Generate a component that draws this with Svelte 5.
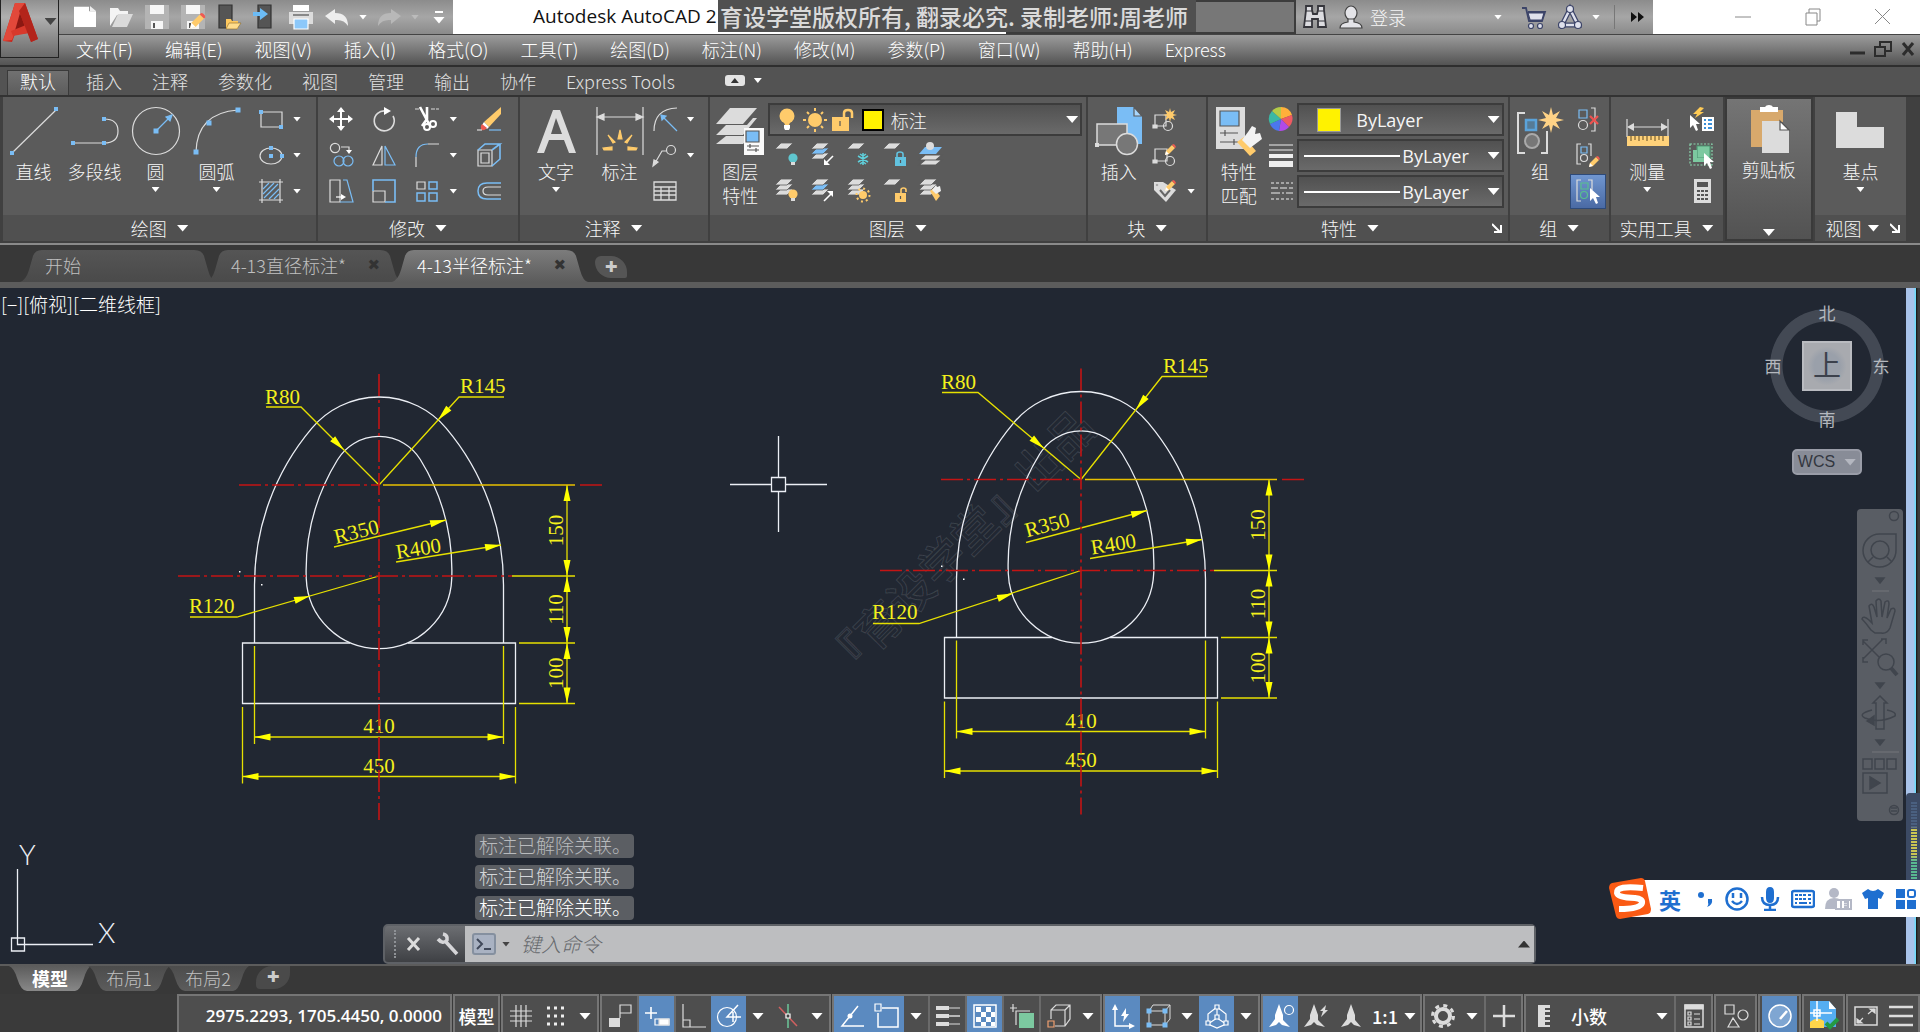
<script>
    let command = "";
    let layer = "标注";

    const W = "#dcdcdc";
    const B = "#7abdf5";
    const O = "#ffcb6b";

    // Small square grip used by many of the drawing icons
    const dot = (x, y, s = 4) =>
        `<rect x="${x - s / 2}" y="${y - s / 2}" width="${s}" height="${s}" fill="${B}" stroke="none"/>`;

    const sheets = (n, mid = W) =>
        [14, 9, 4]
            .slice(3 - n)
            .map(
                (y, i) =>
                    `<path d="M7 ${y - 3}h12l-6 6H1z" fill="${n === 3 && i === 1 ? mid : W}" stroke="#5a5a5a" stroke-width=".8"/>`,
            )
            .join("");

    const bulb = (c) =>
        `<circle cx="19" cy="16" r="4.6" fill="${c}" stroke="none"/><path d="M17 20h4v3h-4z" fill="${W}" stroke="none"/>`;
    const lock = (c) =>
        `<path d="M13 15h11v9H13z" fill="${c}" stroke="none"/><path d="M18.500 18v3" stroke="#555"/>`;
    const brush = `<path d="M12 13l4-3 6 8-4 5z" fill="${O}" stroke="none"/><path d="M14 12l4 4 5-3-1-5-3 1-1-2z" fill="#eee" stroke="none"/>`;
    const pencil = (x, y) =>
        `<g transform="translate(${x} ${y})" stroke="none"><path d="M0 11l1-4 6-6 3 3-6 6z" fill="${O}"/><path d="M7 1l1-1q2 0 3 3l-1 1z" fill="#f05a50"/><path d="M0 11l1-4 3 3z" fill="#fff"/></g>`;
    const pointer = (x, y, s = 1) =>
        `<path transform="translate(${x} ${y}) scale(${s})" d="M0 0v13l3-3 3 6 2-1-2-6h4z" fill="#fff" stroke="none"/>`;

    const icons = {
        // Quick access
        new: `<path d="M1 2h15v5h7v18H1z" transform="scale(1 .88)" fill="#fff" stroke="none"/><path d="M17 1v5h6z" fill="#eee" stroke="none"/>`,
        open: `<path d="M1 21V3h8l2 3h8v4H8z" fill="#f4f4f4" stroke="none"/><path d="M3 22L9 9h15l-6 13z" fill="#dadada" stroke="none"/>`,
        save: `<path d="M0 0h24v24H0z" fill="#b4b4b4" stroke="none"/><path d="M5 0h14v9H5zM6 16h12v8H6z" fill="#f6f6f6" stroke="none"/><path d="M8 18h2v5H8z" fill="#555" stroke="none"/>`,
        phoneOpen: `<path d="M2 0h13v23H2z" fill="#555" stroke="#333"/><path d="M9 14h5l1 2h6v8H9z" fill="#ffc95e" stroke="none"/><path d="M12 18h12l-4 6H9z" fill="#ffdc8c" stroke="#8a6a2a" stroke-width=".6"/>`,
        phoneSave: `<path d="M5 0h13v23H5z" fill="#555" stroke="#333"/><path d="M0 7h7V3l8 6-8 6v-4H0z" fill="#6cbcf6" stroke="none"/>`,
        print: `<path d="M4 0h16v6H4z" fill="#fff" stroke="none"/><path d="M0 7h24v12H0z" fill="#dcdcdc" stroke="none"/><path d="M4 9h16v2H4z" fill="#888" stroke="none"/><path d="M5 14h14v10H5z" fill="#8cc8fa" stroke="#fff"/>`,
        undo: `<path d="M0 11l10-7v4q13 0 13 13-4-7-13-6v4z" fill="#eee" stroke="none"/>`,
        redo: `<path d="M24 11l-10-7v4Q1 8 1 21q4-7 13-6v4z" fill="#b8b8b8" stroke="none"/>`,
        // Info center
        binoculars: `<path d="M3 1h6v4l1 4h4l1-4V1h6v4l2 17h-8v-8h-6v8H1L3 5z" fill="#dcdce0" stroke="#35353b" stroke-width="1.800"/><path d="M2 16h7M15 16h7M3 6h6M15 6h6" stroke="#35353b"/>`,
        user: `<ellipse cx="12" cy="8" rx="6" ry="7" fill="#e4e4e8" stroke="#444"/><path d="M1 23q0-5 8-6v-3h6v3q8 1 8 6z" fill="#e4e4e8" stroke="#444"/>`,
        cart: `<path d="M0 3h4l3 13h13l3-9H6M9 11h13M12 7l1 9M17 7l-1 9" stroke="#3c4468" stroke-width="1.800"/><path d="M6 8h16l-2 7H8z" fill="#dfe1ec" stroke="#3c4468"/><circle cx="9" cy="21" r="2.500" fill="#dfe1ec" stroke="#3c4468"/><circle cx="18" cy="21" r="2.500" fill="#dfe1ec" stroke="#3c4468"/>`,
        share: `<path d="M12 4L4 20h16z" stroke="#3c4468" stroke-width="5"/><path d="M12 4L4 20h16z" stroke="#dfe1ec" stroke-width="2.500"/><circle cx="12" cy="4" r="3.500" fill="#dfe1ec" stroke="#3c4468"/><circle cx="4" cy="20" r="3.500" fill="#dfe1ec" stroke="#3c4468"/><circle cx="20" cy="20" r="3.500" fill="#dfe1ec" stroke="#3c4468"/>`,
        // Draw, large
        line: `<path d="M3 45L46 3"/>${dot(2, 46)}${dot(46, 2)}`,
        pline: `<path d="M2 36h31q14 0 14-12T33 12"/>${dot(2, 36)}${dot(33, 36)}${dot(33, 12)}`,
        circle: `<circle cx="24" cy="24" r="23.500"/><path d="M24 24L38 10" stroke="${B}"/><path d="M40 8l-2 6-4-4z" fill="${B}" stroke="${B}"/>${dot(24, 24, 5)}`,
        arc: `<path d="M3 45Q4 6 45 3"/>${dot(3, 45, 5)}${dot(16, 16, 5)}${dot(45, 3, 5)}`,
        // Draw, small
        rect: `<path d="M2 5h21v15H2z"/>${dot(2, 5)}${dot(22, 20)}`,
        ellipse: `<ellipse cx="12" cy="13" rx="11" ry="8"/>${dot(12, 5)}${dot(12, 13)}${dot(23, 13)}`,
        hatch: `<path d="M3 0v24M21 0v24M0 3h24M0 21h24"/><path d="M4 10l6-6M4 15L15 4M5 19L19 5M10 20l10-10M15 20l5-5" stroke="${B}"/>`,
        // Modify
        move: `<path d="M12 2v20M2 12h20" stroke-width="2" stroke="#fff"/><path d="M12 0l4 5H8zM12 24l4-5H8zM0 12l5-4v8zM24 12l-5-4v8z" fill="#fff" stroke="none"/>`,
        rotate: `<path d="M14 4a10 10 0 1 0 7 5" stroke-width="1.600"/><path d="M12 0l7 4-7 4z" fill="#fff" stroke="none"/>`,
        trim: `<path d="M0 2h6M16 2h8" stroke-dasharray="4 1"/><path d="M5 0l9 17M12 0l0 12-5 7" stroke="#fff" stroke-width="2.600"/><circle cx="12" cy="20" r="3" stroke="#fff" stroke-width="2"/><circle cx="18" cy="17" r="3" stroke="#fff" stroke-width="2"/>`,
        erase: `<path d="M24 0v7L12 20l-5-5z" fill="${O}" stroke="none"/><path d="M7 15l5 5-2 2-5-4z" fill="#fff" stroke="none"/><path d="M5 17l5 4q-4 4-6 1-1-3 1-5z" fill="#ee5a50" stroke="none"/><path d="M0 23h5"/><path d="M12 23h12" stroke="${B}"/>`,
        copy: `<circle cx="6" cy="5" r="4.600"/><circle cx="10" cy="18" r="5" stroke="${B}"/><circle cx="19" cy="18" r="5" stroke="${B}"/><path d="M12 4h8v4"/><path d="M17 7h6l-3 4z" fill="#fff" stroke="none"/>`,
        mirror: `<path d="M10 3v19H1z"/><path d="M13 3v19h10z" stroke="${B}"/>`,
        fillet: `<path d="M1 24v-10M13 1h11"/><path d="M1 14Q1 1 13 1" stroke="${B}"/>`,
        explode: `<path d="M1 7h14v16H1zM4 10h8v10H4z" stroke="${W}"/><path d="M1 7l7-6h15l-8 6M23 1v15l-8 7" stroke="${B}" stroke-width="1.600"/>`,
        stretch: `<path d="M1 1h10v22H1z"/><path d="M11 23h13L18 1h-4" stroke="${B}"/><path d="M7 18h7" stroke="#fff"/><path d="M12 15l5 3-5 3z" fill="#fff" stroke="none"/>`,
        scale: `<path d="M1 12h12v11H1z"/><path d="M1 12V1h22v22H13" stroke="${B}" stroke-width="1.600"/>`,
        array: `<path d="M2 3h8v7H2z"/><path d="M14 3h8v7h-8zM2 14h8v8H2zM14 14h8v8h-8z" stroke="${B}" stroke-width="1.500"/>`,
        offset: `<path d="M24 8H11q-5 0-5 4t5 4h13"/><path d="M24 4H10Q1 4 1 12t9 8h14" stroke="${B}" stroke-width="1.500"/>`,
        // Annotation
        text: `<path d="M5 46L21 3h7l16 43h-7l-5-13H17l-5 13zM19 27h11L24 11z" fill="${W}" stroke="none"/>`,
        dim: `<path d="M1 0v48M47 0v48M3 10h42"/><path d="M1 10l7-3v6zM47 10l-7-3v6z" fill="${W}"/><path d="M22 32l2-9 2 9zM7 41l9-1v3H8zM41 41l-9-1v3h8zM12 28l7 7-2 1zM36 28l-7 7 2 1z" fill="${O}" stroke="${O}"/>`,
        radius: `<path d="M1 24Q1 2 24 1"/><path d="M10 10l14 14" stroke="${B}"/><path d="M8 8l5 1-4 4z" fill="${B}" stroke="${B}"/>`,
        leader: `<circle cx="18" cy="7" r="4.500"/><path d="M13 8H9L2 20"/><path d="M0 23l1-6 4 2z" fill="${W}"/>`,
        table: `<path d="M1 3h22v18H1zM1 8h22M1 12h22M1 16h22M8 8v13M16 8v13" stroke-width="1.300"/>`,
        // Layers
        layerProps: `<path d="M14 1h27L27 17H0zM10 18h4l17 0 6-7h4L27 28H0zM10 29h18l6-6h6L27 37H0z" fill="${W}" stroke="none"/><path d="M28 21h20v27H28z" fill="#fafafa" stroke="none"/><path d="M30 24h13v11H30z" fill="${B}" stroke="#555"/><path d="M31 39h12M31 43h12M34 37v4M40 41v4" stroke="#555"/>`,
        bulb: `<circle cx="12" cy="8" r="7.500" fill="${O}" stroke="none"/><path d="M8 12h8l-2 5h-4z" fill="${O}" stroke="none"/><path d="M9 17h6v3l-1 2h-4l-1-2z" fill="#fff" stroke="none"/>`,
        sun: `<circle cx="12" cy="12" r="7" fill="${O}" stroke="none"/><path d="M12 0v3M12 21v3M0 12h3M21 12h3M4 4l2 2M18 18l2 2M4 20l2-2M18 6l2-2" stroke="${O}" stroke-width="2"/>`,
        unlock: `<path d="M1 9h17v14H1z" fill="${O}" stroke="none"/><path d="M13 9V5q0-3 4-3t4 3v5" stroke="${O}" stroke-width="2.500"/><path d="M9 13v5" stroke="#555"/>`,
        layerOff: sheets(1) + bulb("#5fc6cf"),
        layerIso: sheets(3, B) + `<path d="M23 14l-7 7" stroke="#fff" stroke-width="1.600"/><path d="M14 23v-6l6 6z" fill="#fff" stroke="none"/>`,
        layerFreeze: sheets(1) + `<path d="M17 11v12M12 14l10 6M22 14l-10 6M14 12l3 2 3-2M14 22l3-2 3 2" stroke="#5fd0dc" stroke-width="1.500"/>`,
        layerLock: sheets(1) + lock("#62c3e0") + `<path d="M15 15v-3q0-2 3-2t3 2v3" stroke="#62c3e0" stroke-width="1.600"/>`,
        layerCurrent: `<path d="M7 13h17l-6 5H1zM7 18h17l-6 5H1z" fill="${W}" stroke="#5a5a5a"/><path d="M7 5h17l-6 7H1z" fill="${B}" stroke="none"/><circle cx="12" cy="4" r="4" fill="${W}" stroke="none"/>`,
        layerOn: sheets(3) + bulb(O),
        layerUniso: sheets(3, B) + `<path d="M14 23l7-7" stroke="#fff" stroke-width="1.600"/><path d="M23 13v6l-6-6z" fill="#fff" stroke="none"/>`,
        layerThaw: sheets(3) + `<circle cx="17" cy="17" r="4" fill="${O}" stroke="none"/><circle cx="17" cy="17" r="6.500" stroke="${O}" stroke-width="2" stroke-dasharray="2 3"/>`,
        layerUnlock: sheets(1) + lock(O) + `<path d="M19 15v-3q0-2 2.500-2t2.500 2v2" stroke="${O}" stroke-width="1.600"/>`,
        layerMatch: sheets(3) + brush,
        // Block
        insert: `<path d="M22 0h17l8 9v28H22z" fill="${B}" stroke="none"/><path d="M39 0l8 9h-8z" fill="#a8d6fc" stroke="#5a5a5a"/><path d="M2 17h30v21H2z" fill="#777" stroke="${W}" stroke-width="1.500"/><circle cx="32" cy="37" r="10.500" fill="#777" stroke="${W}" stroke-width="1.500"/><path d="M0 36h4v4H0z" fill="${W}" stroke="none"/>`,
        blockNew: `<path d="M2 8h11v11H2z"/><circle cx="15" cy="19" r="4.500"/><path d="M0 18h4v3H0z" fill="${W}"/><path d="M17 1l1 4 4-2-2 4 4 1-4 1 2 4-4-2-1 4-1-4-4 2 2-4-4-1 4-1-2-4 4 2z" fill="${O}" stroke="none"/>`,
        blockEdit: `<path d="M2 6h12v12H2z"/><circle cx="17" cy="18" r="4.500"/><path d="M0 17h4v3H0z" fill="${W}"/>${pencil(12, 1)}`,
        attribute: `<path d="M1 3h9l13 8-10 12L1 11z" fill="${W}" stroke="none"/><path d="M7 11l5 6 5-6" stroke="#666" stroke-width="2"/><circle cx="4" cy="6" r="1.300" fill="#555"/>${pencil(12, 1)}`,
        // Properties
        match: `<path d="M1 0h29v42H1z" fill="${W}" stroke="none"/><path d="M5 4h19v15H5z" fill="${B}" stroke="#555"/><path d="M5 26h18M5 35h18M10 23v6M19 32v6" stroke="#555"/><path d="M22 35l7-5 12 14-6 5z" fill="${O}" stroke="none"/><path d="M27 33l8 8 12-9-2-6-5 1 1-6-4-2-4 6z" fill="#f2f2f2" stroke="none"/>`,
        lineweights: `<path d="M0 2h24M0 7h24" stroke="#eee"/><path d="M0 13h24" stroke="#eee" stroke-width="4"/><path d="M0 21h24" stroke="#eee" stroke-width="6"/>`,
        linetypes: `<path d="M2 4h22M2 20h22" stroke="#eee" stroke-dasharray="3 2"/><path d="M2 9h22" stroke="#eee" stroke-dasharray="7 2"/><path d="M2 14h22" stroke="#eee" stroke-dasharray="9 2 2 2"/>`,
        wheel: `<g stroke="none"><path d="M12 12V0a12 12 0 0 1 11 8z" fill="#ffb03a"/><path d="M12 12l11-4a12 12 0 0 1-3 12z" fill="#ef5a62"/><path d="M12 12l8 8a12 12 0 0 1-10 4z" fill="#b04ae8"/><path d="M12 12l-2 12A12 12 0 0 1 1 17z" fill="#4b77ee"/><path d="M12 12L1 17A12 12 0 0 1 3 4z" fill="#3ab8a4"/><path d="M12 12L3 4a12 12 0 0 1 9-4z" fill="#b3ca48"/></g>`,
        // Groups
        group: `<path d="M9 6H2v40h7M25 46h6V24" stroke-width="2"/><path d="M10 13h10v10H10z" fill="#567b96" stroke="#5ba3da" stroke-width="2.500"/><circle cx="16" cy="34" r="7" fill="#777" stroke="#aaa" stroke-width="2"/><path d="M35 0l2 8 7-4-4 7 8 2-8 2 4 7-7-4-2 8-2-8-7 4 4-7-8-2 8-2-4-7 7 4z" fill="#ffd386" stroke="none"/>`,
        ungroup: `<path d="M3 3h8v8H3z" stroke="${B}"/><circle cx="7" cy="18" r="4.500"/><path d="M15 1h4v23h-4"/><path d="M14 9l8 8M22 9l-8 8" stroke="#ef5350" stroke-width="2.200"/>`,
        groupEdit: `<path d="M5 1H1v20h4M12 1h3v12" /><path d="M5 4h6v6H5z" stroke="${B}"/><circle cx="8" cy="15" r="3.500"/>${pencil(13, 13)}`,
        groupSelect: `<path d="M5 1H1v21h4M12 1h4v10"/><path d="M5 4h7v6H5z" stroke="#58c08e"/><circle cx="8" cy="16" r="3.500" stroke="#58c08e"/>${pointer(14, 9)}`,
        // Utilities
        measure: `<path d="M4 12v18M45 12v18M6 20h38"/><path d="M4 20l7-4v8zM45 20l-7-4v8z" fill="${W}" stroke="none"/><path d="M4 29h42v10H4z" fill="#ffd27a" stroke="none"/><path d="M8 29v5M12 29v4M16 29v5M20 29v4M24 29v5M28 29v4M32 29v5M36 29v4M40 29v5" stroke="#7a6030"/>`,
        quickSelect: `<path d="M12 10h12v14H12z" fill="#fff" stroke="none"/><path d="M14 13h2M14 17h2M14 21h2M18 13h4M18 17h4M18 21h4" stroke="#3a8fd8" stroke-width="2"/>${pointer(0, 8)}<path d="M10 0L3 7h4l-2 4 9-6h-4l4-4z" fill="#ffcb55" stroke="none"/>`,
        selectAll: `<path d="M0 1h22v21H0z" stroke="#8ad9b0" stroke-dasharray="2 1.500"/><path d="M7 3h13v12H7z" fill="#7cc9a0" stroke="#4e9a74"/><path d="M3 7v12h12v-4H7V7z" fill="#7cc9a0" stroke="none"/>${pointer(14, 10)}`,
        calc: `<path d="M4 0h17v24H4z" fill="${W}" stroke="none"/><path d="M7 3h11v5H7zM7 11h3v2H7zM11 11h3v2h-3zM15 11h3v2h-3zM7 15h3v2H7zM11 15h3v2h-3zM15 15h3v2h-3zM7 19h3v2H7zM11 19h3v2h-3zM15 19h3v2h-3z" fill="#555" stroke="none"/>`,
        paste: `<path d="M6 5h32v12H17v25H6z" fill="#d8a96c" stroke="none"/><path d="M15 2h5q1-2 4-2t4 2h5v5H15z" fill="#fff" stroke="none"/><path d="M17 16h18l9 9v23H17z" fill="${W}" stroke="none"/><path d="M35 16v9h9z" fill="#fff" stroke="#555"/>`,
        base: `<path d="M0 5h21v15h27v21H0z" fill="${W}" stroke="none"/>`,
        // Status bar
        grid: `<path d="M7 1v22M12 1v22M17 1v22M1 7h22M1 12h22M1 17h22"/>`,
        snap: `<path d="M3 4h3M10 4h3M17 4h3M3 12h3M10 12h3M17 12h3M3 20h3M10 20h3M17 20h3" stroke="#eee" stroke-width="3"/>`,
        infer: `<path d="M1 14h11v9H1z" fill="${W}" stroke="none"/><path d="M12 14V1h11v8H12"/>`,
        dynamic: `<path d="M6 3v12M0 9h12" stroke="#fff" stroke-width="1.600"/><path d="M10 15h14v6H10z" stroke="#fff"/><path d="M14 15h10v6H14z" fill="#fff"/>`,
        ortho: `<path d="M1 0v23h23M1 16h7v7"/>`,
        polar: `<circle cx="10" cy="13" r="9.500" stroke="#fff"/><path d="M24 13H10L21 1M16 8v10" stroke="#fff" stroke-width="1.500"/>`,
        iso: `<path d="M12 0v24" stroke="#6cc79a" stroke-width="1.500"/><path d="M3 3l18 19" stroke="#d06060" stroke-width="1.500"/><path d="M10 10h4v4h-4z" fill="#444" stroke="#fff"/>`,
        otrack: `<path d="M18 2L2 22h22" stroke="#fff" stroke-width="1.500"/><circle cx="10" cy="12" r="2.500" fill="#fff" stroke="none"/>`,
        osnap: `<path d="M7 4h16v19H3V9" stroke="#fff" stroke-width="1.500"/><path d="M0 0h6v7H0z" stroke="#fff"/>`,
        lwt: `<path d="M0 4h24M0 20h24"/><path d="M0 4h13M0 20h13" stroke-width="4"/><path d="M0 12h24" stroke-width="1.500"/><path d="M0 12h13" stroke-width="4"/>`,
        transparency: `<path d="M1 1h22v22H1z" stroke="#fff" stroke-width="1.500"/><path d="M3 3h5v5H3zM13 3h5v5h-5zM8 8h5v5H8zM18 8h4v5h-4zM3 13h5v5H3zM13 13h5v5h-5zM8 18h5v4H8zM18 18h4v4h-4z" fill="#fff" stroke="none"/>`,
        cycling: `<path d="M3 0v8M0 4h7M6 21V7h14"/><path d="M9 9h15v15H9z" fill="#7cc9a0" stroke="none"/>`,
        osnap3d: `<path d="M4 15V6l5-5h14v14l-5 7H8M4 6h14v16M18 6l5-5"/><path d="M1 17h6v6H1z" stroke="#f0a070"/>`,
        ducs: `<path d="M4 4v18h18" stroke="#fff" stroke-width="1.500"/><path d="M4 0l3 6H1zM24 22l-6-3v6z" fill="#fff" stroke="none"/><path d="M15 4l-5 8h3l-1 6 6-8h-3z" fill="#fff" stroke="none"/>`,
        filter: `<path d="M3 7v14h16V7zM3 7l4-6h17v14l-5 6M19 7l5-6" stroke-width="1"/>${dot(3, 7, 5)}${dot(19, 7, 5)}${dot(3, 21, 5)}${dot(19, 21, 5)}`,
        gizmo: `<path d="M12 3L3 10v10l9 4 9-4V10zM12 14V4M12 14l-9 6M12 14l9 6" stroke="#fff"/><path d="M10 1h4v4h-4zM10 11h4v4h-4zM1 17h4v4H1zM19 17h4v4h-4z" fill="#5b8ac0" stroke="#fff"/>`,
        annoOn: `<path d="M10 0l4 11v5l7 7-8-2-3-3-3 3-7 2 6-8V11z" fill="#fff" stroke="none"/><circle cx="20" cy="6" r="4.500" stroke="#fff"/>`,
        annoAuto: `<path d="M10 0l4 11v5l7 7-8-2-3-3-3 3-7 2 6-8V11z" fill="${W}" stroke="none"/><path d="M22 1l-6 6h3l-2 6 7-7h-3z" fill="${W}" stroke="none"/>`,
        anno: `<path d="M12 0l4 11v5l6 7-7-2-3-3-3 3-7 2 6-8V11z" fill="${W}" stroke="none"/>`,
        gear: `<circle cx="12" cy="12" r="7" stroke-width="4"/><circle cx="12" cy="12" r="10.500" stroke-width="3" stroke-dasharray="4 4.240"/>`,
        plus: `<path d="M12 1v22M1 12h22" stroke-width="2.500"/>`,
        ruler: `<path d="M6 1h12v3h-5v2h5v2h-5v3h5v2h-5v3h5v2h-5v3h5v2H6z" fill="${W}" stroke="none"/>`,
        quickProps: `<path d="M3 1h18v22H3z" stroke-width="1.500"/><path d="M3 1h18v4H3z" fill="${W}"/><path d="M6 8h3v3H6zM6 13h3v3H6zM6 18h3v3H6zM12 10h6M12 15h6M12 20h6"/>`,
        isolate: `<path d="M1 1h9v9H1zM4 23l5-9 6 9z"/><circle cx="19" cy="11" r="5"/>`,
        perf: `<circle cx="12" cy="12" r="11" fill="#7fa6d2" stroke="#fff" stroke-width="1.500"/><path d="M12 15L19 7" stroke="#fff" stroke-width="2.500"/>`,
        trusted: `<path d="M-2 -3h19l7 8v18H-2z" fill="#55aef2" stroke="none"/><path d="M17 -3v8h7z" fill="#fff" stroke="none"/><path d="M-2 18q7-6 14-1v7H-2z" fill="#ffd54a" stroke="none"/><path d="M-2 9h22M5 -3v20M2 6h6v6H2z" stroke="#fff" stroke-width="1.500"/><path d="M14 19l4 4 8-8" stroke="#249a44" stroke-width="4"/>`,
        clean: `<path d="M1 3h22v18H1z" stroke-width="1.500"/><path d="M14 10l6-5M9 14l-5 5"/><path d="M16 5h5v4zM3 15v4h5z" fill="${W}"/>`,
        menu: `<path d="M0 3h24M0 12h24M0 21h24" stroke-width="2.500"/>`,
        wrench: `<path d="M7 2q5 1 4 6-4 5-9-1M10 10l11 12" stroke="#d5d5d8" stroke-width="3.600"/>`,
    };
    icons.saveAs = icons.save + `<g transform="translate(9 8) scale(1.400)">${pencil(0, 0)}</g>`;

    const quick = ["new", "open", "save", "saveAs", "phoneOpen", "phoneSave", "print"];
    const menus = [
        "文件(F)", "编辑(E)", "视图(V)", "插入(I)", "格式(O)", "工具(T)", "绘图(D)",
        "标注(N)", "修改(M)", "参数(P)", "窗口(W)", "帮助(H)", "Express",
    ];
    const tabs = ["默认", "插入", "注释", "参数化", "视图", "管理", "输出", "协作", "Express Tools"];
    const drawBig = [
        ["line", "直线"],
        ["pline", "多段线"],
        ["circle", "圆", true],
        ["arc", "圆弧", true],
    ];
    const modify = [
        ["move"], ["rotate"], ["trim", true], ["erase"],
        ["copy"], ["mirror"], ["fillet", true], ["explode"],
        ["stretch"], ["scale"], ["array", true], ["offset"],
    ];
    const layerRows = [
        ["layerOff", "layerIso", "layerFreeze", "layerLock", "layerCurrent"],
        ["layerOn", "layerUniso", "layerThaw", "layerUnlock", "layerMatch"],
    ];

    // Status bar: groups of toggles, "v" stands for a drop-down arrow, "|" for a divider
    const statusGroups = [
        ["grid", "snap", "v"],
        ["infer", "|", "dynamic*", "|", "ortho", "polar*", "v", "iso", "v"],
        ["otrack*", "osnap*", "v", "|", "lwt", "|", "transparency*", "|", "cycling", "|", "osnap3d", "v"],
        ["ducs*", "filter", "v", "gizmo*", "v"],
    ];

    // Leaders are relative to the centre of the upper arcs of each figure
    const figures = [
        {
            x: 379,
            y: 485,
            leaders: [
                { text: "R80", at: [-114, -81], rot: 0, line: [[-113, -78], [-78, -78], [0, 0]], from: [-78, -78], tip: [-35, -35] },
                { text: "R145", at: [81, -92], rot: 0, line: [[125, -88], [80, -88], [0, 0]], from: [80, -88], tip: [59, -65] },
                { text: "R350", at: [-43, 59], rot: -14, line: [[-45, 62], [67, 35]], from: [-45, 62], tip: [67, 35] },
                { text: "R400", at: [18, 74], rot: -9, line: [[17, 77], [122, 60]], from: [17, 77], tip: [122, 60] },
                { text: "R120", at: [-190, 128], rot: 0, line: [[-189, 132], [-142, 132], [0, 91]], from: [-142, 132], tip: [-69, 111] },
            ],
        },
        {
            x: 1081,
            y: 479.5,
            leaders: [
                { text: "R80", at: [-140, -91], rot: 0, line: [[-139, -87], [-103, -87], [0, 0]], from: [-103, -87], tip: [-37, -31] },
                { text: "R145", at: [82, -107], rot: 0, line: [[126, -103], [81, -103], [0, 0]], from: [81, -103], tip: [55, -70] },
                { text: "R350", at: [-54, 58], rot: -15, line: [[-55, 63], [66, 31]], from: [-55, 63], tip: [66, 31] },
                { text: "R400", at: [11, 75], rot: -9, line: [[9, 79], [121, 60]], from: [9, 79], tip: [121, 60] },
                { text: "R120", at: [-209, 139], rot: 0, line: [[-208, 144], [-162, 144], [0, 91]], from: [-162, 144], tip: [-68, 114] },
            ],
        },
    ];
    const vertical = [
        { text: "150", a: 0, b: 91 },
        { text: "110", a: 91, b: 158 },
        { text: "100", a: 158, b: 218.5 },
    ];
    const horizontal = [
        { text: "410", half: 124.5, y: 252, top: 161 },
        { text: "450", half: 136.5, y: 291.5, top: 222 },
    ];
    const angle = (from, tip) =>
        (Math.atan2(tip[1] - from[1], tip[0] - from[0]) * 180) / Math.PI;
</script>

<svelte:head>
    <title>Autodesk AutoCAD</title>
</svelte:head>

{#snippet icon(name, size = 24)}
    <svg class="ic" width={size} height={size} viewBox="0 0 {size} {size}" aria-hidden="true">
        {@html icons[name]}
    </svg>
{/snippet}

{#snippet small(name, arrow)}
    <span class="small">
        <button aria-label={name}>{@render icon(name)}</button>
        {#if arrow}<button class="drop" aria-label="更多"><i class="tri"></i></button>{/if}
    </span>
{/snippet}

{#snippet big(name, label, arrow)}
    <button class="big">
        {@render icon(name, 48)}
        <span>{label}</span>
        {#if arrow}<i class="tri"></i>{/if}
    </button>
{/snippet}

{#snippet launcher()}
    <button class="launcher" aria-label="设置">
        <svg width="10" height="10" viewBox="0 0 10 10"><path d="M0 1l8 8M9 2v7H2" /></svg>
    </button>
{/snippet}

{#snippet head(tip, deg)}
    <path class="head" d="M0 0L-16 -3.500V3.500Z" transform="translate({tip[0]} {tip[1]}) rotate({deg})" />
{/snippet}

{#snippet cell(item)}
    {#if item === "v"}
        <button class="st-arrow" aria-label="更多"><i class="tri lg"></i></button>
    {:else if item === "|"}
        <i class="bar"></i>
    {:else}
        <button class="st" class:on={item.endsWith("*")} aria-label={item.replace("*", "")}>
            {@render icon(item.replace("*", ""))}
        </button>
    {/if}
{/snippet}

<main>
    <header>
        <button class="app" aria-label="应用程序菜单">
            <svg width="38" height="42" viewBox="0 0 38 42" aria-hidden="true">
                <path d="M0 40L12 2h10l13 36-7 3-3-9-13 1-3 8z" fill="#c8281e" />
                <path d="M12 2h10L15 24l-6 15-9 1z" fill="#e2483a" />
                <path d="M17 12l7 20-13 1z" fill="#8c1812" />
                <path d="M8 30l15-6 3 8-16 3z" fill="#d8392c" />
                <path d="M22 2l13 36-7 3L16 10z" fill="#b3241b" />
            </svg>
            <i class="tri lg dark"></i>
        </button>
        <div class="titlebar">
            <div class="quick">
                {#each quick as name}
                    <button aria-label={name}>{@render icon(name)}</button>
                {/each}
                <button aria-label="放弃">{@render icon("undo")}</button>
                <i class="tri"></i>
                <button aria-label="重做">{@render icon("redo")}</button>
                <i class="tri dim"></i>
                <button class="more" aria-label="自定义"><i class="tri lg"></i></button>
            </div>
            <div class="title">Autodesk AutoCAD 2</div>
            <input class="search" aria-label="搜索" />
            <div class="info">
                <button aria-label="搜索">{@render icon("binoculars")}</button>
                <button aria-label="用户">{@render icon("user")}</button>
                <button class="login">登录 <i class="tri"></i></button>
                <button aria-label="应用商店">{@render icon("cart")}</button>
                <button aria-label="连接">{@render icon("share")}</button>
                <i class="tri"></i>
                <button class="ff" aria-label="展开">
                    <svg width="14" height="10" viewBox="0 0 14 10"><path d="M0 0l6 5-6 5zM7 0l6 5-6 5z" fill="#111" /></svg>
                </button>
            </div>
            <div class="window">
                <button aria-label="最小化"><svg width="16" height="18"><path d="M0 9h16" /></svg></button>
                <button aria-label="还原"><svg width="16" height="18"><path d="M1 5h11v12H1zM4 5V1h11v12h-3" /></svg></button>
                <button aria-label="关闭"><svg width="16" height="18"><path d="M0 1l15 15M15 1L0 16" /></svg></button>
            </div>
            <div class="banner">育设学堂版权所有, 翻录必究. 录制老师:周老师</div>
        </div>
        <nav class="menubar">
            {#each menus as item}
                <button>{item}</button>
            {/each}
            <div class="mdi">
                <button aria-label="最小化窗口"><svg width="18" height="18"><path d="M1 13h15" stroke-width="3" /></svg></button>
                <button aria-label="还原窗口"><svg width="18" height="18"><path d="M1 7h10v9H1zM6 6V2h11v9h-5" stroke-width="2" /></svg></button>
                <button aria-label="关闭窗口"><svg width="18" height="18"><path d="M4 3l10 12M14 3L4 15" stroke-width="3" /></svg></button>
            </div>
        </nav>
    </header>

    <nav class="tabs">
        {#each tabs as tab, i}
            <button class:active={i === 0}>{tab}</button>
        {/each}
        <button class="fold" aria-label="最小化功能区"><span><i class="tri up"></i></span><i class="tri"></i></button>
    </nav>

    <section class="ribbon">
        <div class="panel">
            <div class="body">
                {#each drawBig as [name, label, arrow]}
                    {@render big(name, label, arrow)}
                {/each}
                <div class="stack pad">
                    {@render small("rect", true)}
                    {@render small("ellipse", true)}
                    {@render small("hatch", true)}
                </div>
            </div>
            <h2>绘图 <i class="tri lg"></i></h2>
        </div>
        <div class="panel">
            <div class="body modify">
                {#each modify as [name, arrow]}
                    {@render small(name, arrow)}
                {/each}
            </div>
            <h2>修改 <i class="tri lg"></i></h2>
        </div>
        <div class="panel wide">
            <div class="body">
                {@render big("text", "文字", true)}
                {@render big("dim", "标注")}
                <div class="stack">
                    {@render small("radius", true)}
                    {@render small("leader", true)}
                    {@render small("table")}
                </div>
            </div>
            <h2>注释 <i class="tri lg"></i></h2>
        </div>
        <div class="panel">
            <div class="body">
                {@render big("layerProps", "图层\n特性")}
                <div class="layers">
                    <div class="combo">
                        {@render icon("bulb")}
                        {@render icon("sun")}
                        {@render icon("unlock")}
                        <b class="swatch"></b>
                        <select bind:value={layer} aria-label="图层"><option>标注</option></select>
                        <i class="tri lg"></i>
                    </div>
                    {#each layerRows as row}
                        <div class="row">
                            {#each row as name}
                                <button aria-label={name}>{@render icon(name)}</button>
                            {/each}
                        </div>
                    {/each}
                </div>
            </div>
            <h2>图层 <i class="tri lg"></i></h2>
        </div>
        <div class="panel">
            <div class="body">
                {@render big("insert", "插入")}
                <div class="stack near">
                    {@render small("blockNew")}
                    {@render small("blockEdit")}
                    {@render small("attribute", true)}
                </div>
            </div>
            <h2>块 <i class="tri lg"></i></h2>
        </div>
        <div class="panel">
            <div class="body">
                {@render big("match", "特性\n匹配")}
                <div class="stack">
                    {@render small("wheel")}
                    {@render small("lineweights")}
                    {@render small("linetypes")}
                </div>
                <div class="props">
                    <div class="combo">
                        <b class="swatch tall"></b>
                        <select aria-label="对象颜色"><option>ByLayer</option></select>
                        <i class="tri lg"></i>
                    </div>
                    <div class="combo">
                        <b class="rule"></b>
                        <select aria-label="线宽"><option>ByLayer</option></select>
                        <i class="tri lg"></i>
                    </div>
                    <div class="combo">
                        <b class="rule"></b>
                        <select aria-label="线型"><option>ByLayer</option></select>
                        <i class="tri lg"></i>
                    </div>
                </div>
            </div>
            <h2 class="launch">特性 <i class="tri lg"></i>{@render launcher()}</h2>
        </div>
        <div class="panel">
            <div class="body">
                {@render big("group", "组")}
                <div class="stack groups">
                    {@render small("ungroup")}
                    {@render small("groupEdit")}
                    {@render small("groupSelect")}
                </div>
            </div>
            <h2>组 <i class="tri lg"></i></h2>
        </div>
        <div class="panel wide">
            <div class="body">
                {@render big("measure", "测量", true)}
                <div class="stack">
                    {@render small("quickSelect")}
                    {@render small("selectAll")}
                    {@render small("calc")}
                </div>
            </div>
            <h2>实用工具 <i class="tri lg"></i></h2>
        </div>
        <div class="panel clip">
            <div class="body">{@render big("paste", "剪贴板")}</div>
            <i class="tri lg"></i>
        </div>
        <div class="panel view">
            <div class="body">{@render big("base", "基点", true)}</div>
            <h2 class="launch">视图 <i class="tri lg"></i>{@render launcher()}</h2>
        </div>
    </section>

    <nav class="files">
        <button>开始</button>
        <button>4-13直径标注* <b>✖</b></button>
        <button class="active">4-13半径标注* <b>✖</b></button>
        <button class="add" aria-label="新图形">✚</button>
    </nav>

    <section class="canvas">
        <svg class="drawing" viewBox="0 288 1920 676" preserveAspectRatio="xMinYMin meet">
            <text class="mark" transform="translate(848 657) rotate(-45)" x="-23" y="16">『育设学堂』出品</text>
            {#each figures as fig}
                <g transform="translate({fig.x} {fig.y})">
                    <path class="solid" d="M-124.500 158V99.700A242.800 242.800 0 0 1 -67.300 -56.700A88 88 0 0 1 67.300 -56.700A242.800 242.800 0 0 1 124.500 99.700V158" />
                    <path class="solid" d="M-41.300 -25.500A48.500 48.500 0 0 1 41.300 -25.500A212.400 212.400 0 0 1 72.750 93.600A72.800 72.800 0 0 1 -72.750 93.600A212.400 212.400 0 0 1 -41.300 -25.500" />
                    <path class="solid" d="M-29 158H-136.500V218.500H136.500V158H29" />
                    {#each vertical as d}
                        <path class="dimline" d="M188 {d.a}V{d.b}" />
                        {@render head([188, d.a], -90)}
                        {@render head([188, d.b], 90)}
                        <text class="label mid" transform="translate(184 {(d.a + d.b) / 2}) rotate(-90)">{d.text}</text>
                    {/each}
                    <path class="dimline" d="M133 91H196M140 158H196M140 218.500H196" />
                    {#each horizontal as d}
                        <path class="dimline" d="M{-d.half} {d.y}H{d.half}M{-d.half} {d.top}V{d.y + 7}M{d.half} {d.top}V{d.y + 7}" />
                        {@render head([-d.half, d.y], 180)}
                        {@render head([d.half, d.y], 0)}
                        <text class="label mid" x="0" y={d.y - 4}>{d.text}</text>
                    {/each}
                    {#each fig.leaders as l}
                        <polyline class="dimline" points={l.line.join(" ")} />
                        {@render head(l.tip, angle(l.from, l.tip))}
                        <text class="label" transform="translate({l.at.join(' ')}) rotate({l.rot})">{l.text}</text>
                    {/each}
                    <path class="axis" d="M0 -111V335M-140 0H0M201 0H223M-201 91H133" />
                    <path class="dimline gold" d="M4 0H196" />
                    <path d="M-140 86h1.500v1.500h-1.500zM-118 99h1.500v1.500h-1.500z" fill="#fff" />
                </g>
            {/each}
            <path class="solid" d="M730 484.500H771M785 484.500H827M778.500 436V478M778.500 491V532M771.500 477.500h14v14h-14z" />
            <g class="ucs">
                <path class="solid" d="M17.500 869V944.500H93M11.500 938h13v13h-13z" />
                <text x="19" y="865">Y</text>
                <text x="98" y="943">X</text>
            </g>
        </svg>

        <div class="cube">
            <span>北</span>
            <span>西</span><b>上</b><span>东</span>
            <span>南</span>
        </div>
        <button class="wcs">WCS <i class="tri lg"></i></button>

        <div class="navbar">
            <svg width="46" height="312" viewBox="0 0 46 312" aria-hidden="true">
                <circle cx="37" cy="7" r="4.500" />
                <path d="M23 25h16v16a16.500 16.500 0 1 1-16-16z" />
                <circle cx="23" cy="41" r="9" />
                <path d="M16 48l-5 5M30 48l5 5" />
                <path class="f" d="M19 69h8l-4 5zM19 174h8l-4 5zM19 231h8l-4 5z" />
                <path class="sep" d="M15 82h17M15 243h27" />
                <path d="M14 121q-5-7-9-11 1-4 7 1l3 3-3-17q3-4 5 1l3 10-1-16q3-4 5 0l1 16 3-15q4-3 4 2l-2 14 4-9q4-2 4 2l-5 17q-3 6-9 5h-6z" />
                <path d="M6 132l17 17M6 150l20-20M6 136v-5h5M24 130h5v5M6 148v5h5" />
                <circle cx="29" cy="153" r="8" />
                <path class="thick" d="M34 159l6 7" />
                <path d="M19 220v-26h-3l7-7 7 7h-3v26z" />
                <path d="M15 201q-15 4-7 8 14 6 30-2 2-4-8-6" />
                <path class="f" d="M10 212l7-5v9z" />
                <path d="M6 250h9v10H6zM18 250h9v10h-9zM30 250h9v10h-9zM6 264h24v20H6z" />
                <path class="f" d="M13 268l10 6-10 6z" />
                <circle cx="37" cy="301" r="4.500" />
                <path d="M34 299h6M34 302h6" />
            </svg>
        </div>

        <div class="edge"><i></i></div>

        <div class="ime">
            <svg class="logo" width="46" height="44" viewBox="0 0 46 44" aria-hidden="true">
                <path d="M5 6L34 1q3 0 4 3l6 28q0 4-3 5L13 42q-3 0-4-3L2 11q0-4 3-5z" fill="#fa5a14" />
                <path d="M36 11Q9 8 10 16q1 5 18 5 8 1 7 5-2 6-23 6" fill="none" stroke="#fff" stroke-width="6" />
            </svg>
            <b>英</b>
            <svg width="24" height="24" viewBox="0 0 24 24"><circle cx="9" cy="8" r="3" fill="#1f6fd0" /><path d="M16 12h4q1 6-5 8 2-3 1-4z" fill="#1f6fd0" /></svg>
            <svg width="24" height="24" viewBox="0 0 24 24"><circle cx="12" cy="12" r="10.500" fill="none" stroke="#1f6fd0" stroke-width="2.500" /><path d="M8 6v5M16 6v5M7 14q5 6 10 0" fill="none" stroke="#1f6fd0" stroke-width="2.500" /></svg>
            <svg width="24" height="24" viewBox="0 0 24 24"><path d="M8 5q0-5 4-5t4 5v6q0 5-4 5t-4-5z" fill="#1f6fd0" /><path d="M4 10q0 8 8 8t8-8M12 18v5M6 23h12" fill="none" stroke="#1f6fd0" stroke-width="2.500" /></svg>
            <svg width="24" height="24" viewBox="0 0 24 24"><rect x="1" y="4" width="22" height="16" rx="2" fill="none" stroke="#1f6fd0" stroke-width="2.500" /><path d="M4 8h3M8 8h3M12 8h3M17 8h3M4 12h3M8 12h3M12 12h3M17 12h3M4 16h2M8 16h8M18 16h2" stroke="#1f6fd0" stroke-width="2" /></svg>
            <svg width="28" height="24" viewBox="0 0 28 24"><circle cx="10" cy="6" r="5" fill="#b4b8c6" /><path d="M1 22q0-11 9-11t9 7v4z" fill="#b4b8c6" /><path d="M12 13h15v9H12z" fill="#fff" stroke="#b4b8c6" stroke-width="2" /><path d="M17 14v7M20 15h4v5h-4M20 17.500h4" stroke="#b4b8c6" stroke-width="2" fill="none" /></svg>
            <svg width="24" height="24" viewBox="0 0 24 24"><path d="M7 2q5 4 10 0l6 4-3 6-3-1v11H7V11l-3 1-3-6z" fill="#1f6fd0" /></svg>
            <svg width="24" height="24" viewBox="0 0 24 24"><path d="M2 2h9v9H2zM2 13h9v9H2zM13 13h9v9h-9z" fill="#1f6fd0" /><rect x="14" y="3" width="7" height="7" rx="2" fill="none" stroke="#1f6fd0" stroke-width="2" /></svg>
        </div>

        <div class="console">
            <p>标注已解除关联。</p>
            <p>标注已解除关联。</p>
            <p>标注已解除关联。</p>
            <div class="command">
                <i class="grip"></i>
                <button aria-label="关闭"><svg width="16" height="16"><path d="M2 2l11 12M13 2L2 14" stroke="#dcdcdc" stroke-width="3" /></svg></button>
                <button aria-label="自定义">{@render icon("wrench")}</button>
                <label>
                    <svg width="24" height="24" viewBox="0 0 24 24"><rect x="1" y="2" width="22" height="20" rx="2" fill="#a9b2c2" stroke="#85909f" stroke-width="2" /><path d="M5 7l5 5-5 5M12 17h7" fill="none" stroke="#40495a" stroke-width="2" /></svg>
                    <i class="tri dark"></i>
                    <input bind:value={command} placeholder="键入命令" aria-label="键入命令" />
                    <i class="tri up lg"></i>
                </label>
            </div>
        </div>
    </section>

    <nav class="layouts">
        <button class="active">模型</button>
        <button>布局1</button>
        <button>布局2</button>
        <button class="add" aria-label="新建布局">✚</button>
    </nav>

    <footer>
        <div class="grp"><button class="coords">2975.2293, 1705.4450, 0.0000</button></div>
        <div class="grp"><button class="model">模型</button></div>
        {#each statusGroups as group}
            <div class="grp">
                {#each group as item}
                    {@render cell(item)}
                {/each}
            </div>
        {/each}
        <div class="grp">
            {#each ["annoOn*", "annoAuto", "anno"] as item}
                {@render cell(item)}
            {/each}
            <button class="scale">1:1 <i class="tri lg"></i></button>
        </div>
        <div class="grp">
            {#each ["gear", "v", "|", "plus"] as item}
                {@render cell(item)}
            {/each}
        </div>
        <div class="grp grow">
            {@render cell("ruler")}
            <select class="units" aria-label="单位"><option>小数</option></select>
            <i class="tri lg"></i>
            {@render cell("|")}
            {@render cell("quickProps")}
        </div>
        <div class="grp roomy">{@render cell("isolate")}</div>
        <div class="grp roomy">{@render cell("perf*")}</div>
        <div class="grp roomy">{@render cell("trusted")}</div>
        <div class="grp">
            {@render cell("clean")}
            {@render cell("menu")}
        </div>
    </footer>
</main>

<style>
    :global(body) {
        background: #383838;
    }

    main {
        display: flex;
        flex-direction: column;
        min-height: 100vh;
        overflow: hidden;
        font-family: "Noto Sans CJK SC", "Open Sans", sans-serif;
        font-size: 18px;
        font-weight: 300;
        line-height: 24px;
        color: #f6f6f6;
    }

    button,
    input,
    select {
        margin: 0;
        padding: 0;
        border: none;
        background: none;
        color: inherit;
        font: inherit;
        appearance: none;
        outline: none;
    }

    button {
        display: flex;
        align-items: center;
        justify-content: center;
        white-space: nowrap;
    }

    .ic {
        display: block;
        flex: none;
        overflow: visible;
        fill: none;
        stroke: #dcdcdc;
        stroke-width: 1.2;
    }

    /* Triangles */
    .tri {
        flex: none;
        width: 8px;
        height: 5px;
        background: #fff;
        clip-path: polygon(0 0, 100% 0, 50% 100%);
    }

    .tri.lg {
        width: 12px;
        height: 7px;
    }

    .tri.up {
        clip-path: polygon(50% 0, 100% 100%, 0 100%);
        background: #333;
    }

    .tri.dim {
        background: #bbb;
    }

    .tri.dark {
        background: #444;
    }

    /* Header */
    header {
        display: grid;
        grid-template-columns: 59px 1fr;
        grid-template-rows: 35px 32px;
    }

    .app {
        z-index: 1;
        grid-area: 1 / 1 / 3 / 2;
        height: 58px;
        padding-bottom: 14px;
        gap: 4px;
        background: linear-gradient(#909090, #b0b0b0 30%, #6a6a6a);
        border: 1px solid #222;
        border-top: none;
    }

    .titlebar {
        position: relative;
        display: flex;
        height: 34px;
        border-bottom: 1px solid #444;
        background: #fff;
    }

    .quick,
    .info {
        display: flex;
        align-items: center;
        background: linear-gradient(#8c8c8c, #a6a6a6 50%, #8a8a8a);
    }

    .quick {
        gap: 12px;
        width: 380px;
        padding-left: 14px;
    }

    .quick .tri {
        margin: 0 -2px;
    }

    .more {
        border-top: 2px solid #fff;
        padding-top: 4px;
        margin-left: 6px;
    }

    .title {
        flex: 1;
        padding-left: 80px;
        font-family: "Open Sans", sans-serif;
        font-size: 19px;
        font-weight: 400;
        line-height: 33px;
        color: #111;
        white-space: nowrap;
    }

    .search {
        width: 290px;
        box-sizing: border-box;
        background: #777;
        border: 2px solid #3c3c3c;
    }

    .info {
        gap: 12px;
        width: 350px;
        padding-left: 7px;
    }

    .info .tri {
        margin-left: -2px;
    }

    .login {
        flex: 1;
        justify-content: space-between;
        padding-right: 8px;
        margin-left: -5px;
    }

    .ff {
        height: 24px;
        margin-left: 2px;
        padding: 0 8px 0 16px;
        border-left: 1px solid #777;
    }

    .window {
        display: flex;
        align-items: center;
        justify-content: flex-end;
        gap: 54px;
        width: 267px;
        padding-right: 29px;
        box-sizing: border-box;
    }

    .window path {
        fill: none;
        stroke: #888;
    }

    .banner {
        position: absolute;
        top: 0;
        left: 659px;
        padding: 0 8px 0 2px;
        background: #505050;
        color: #dadada;
        font-size: 23px;
        font-weight: 500;
        line-height: 32px;
        white-space: pre;
    }

    .menubar {
        grid-area: 2 / 1 / 3 / 3;
        display: flex;
        align-items: center;
        gap: 32px;
        padding: 0 0 3px 76px;
        background: linear-gradient(#9c9c9c, #535353);
        border-bottom: 2px solid #2e2e2e;
        color: #fff;
    }

    .mdi {
        display: flex;
        gap: 7px;
        margin-left: auto;
        padding-right: 3px;
    }

    .mdi path {
        fill: none;
        stroke: #2c2c2c;
    }

    /* Ribbon tabs */
    .tabs {
        display: flex;
        align-items: flex-end;
        gap: 4px;
        height: 28px;
        padding-left: 7px;
        background: #535353;
        border-bottom: 2px solid #333;
        color: #e2e2e2;
    }

    .tabs button {
        height: 25px;
        padding: 0 13px 4px;
        box-sizing: border-box;
    }

    .tabs .active {
        padding: 0 12px 4px;
        background: linear-gradient(#717171, #5c5c5c);
        border: 1px solid #3a3a3a;
        border-bottom: none;
        color: #fff;
    }

    .tabs .fold {
        gap: 9px;
        margin-left: 20px;
    }

    .fold span {
        display: flex;
        align-items: center;
        justify-content: center;
        width: 20px;
        height: 11px;
        background: #e4e4e4;
        border-radius: 3px;
    }

    /* Ribbon */
    .ribbon {
        display: grid;
        grid-template-columns: 313fr 199fr 188fr 376fr 118fr 299fr 99fr 112fr 88fr 91fr;
        gap: 2px;
        padding: 0 14px 0 3px;
        background: #404040;
        border-bottom: 2px solid #8a8a8a;
    }

    .panel {
        display: flex;
        flex-direction: column;
        min-width: 0;
        height: 144px;
        margin-bottom: 2px;
        background: #5b5b5b;
    }

    .body {
        display: flex;
        height: 118px;
        box-sizing: border-box;
        padding-top: 4px;
    }

    h2 {
        display: flex;
        align-items: center;
        justify-content: center;
        gap: 10px;
        height: 26px;
        margin: 0;
        background: #505050;
        font-size: 18px;
        font-weight: 300;
        white-space: nowrap;
    }

    .launcher {
        margin-left: auto;
        padding-right: 6px;
    }

    .launcher path {
        fill: none;
        stroke: #fff;
        stroke-width: 2;
    }

    .launch::before {
        content: "";
        margin-right: auto;
    }

    .view .launch {
        gap: 6px;
    }

    .big {
        flex: none;
        flex-direction: column;
        justify-content: flex-start;
        width: 61px;
        padding-top: 6px;
    }

    .wide .big {
        width: 54px;
    }

    .wide .big:first-child {
        width: 73px;
    }

    .big span {
        padding-top: 4px;
        white-space: pre;
    }

    .big .tri {
        margin-top: 4px;
    }

    .stack {
        display: flex;
        flex-direction: column;
    }

    .wide .stack {
        padding-left: 6px;
    }

    .pad {
        padding-left: 12px;
    }

    .near {
        padding-left: 4px;
    }

    .small {
        display: flex;
        align-items: center;
        height: 36px;
    }

    .drop {
        width: 28px;
        height: 24px;
    }

    .modify {
        display: grid;
        grid-template-columns: 43px 43px 62px 24px;
        grid-auto-rows: 36px;
        padding-left: 11px;
    }

    .layers,
    .props {
        flex: 1;
        min-width: 0;
        padding: 2px 4px 0 0;
    }

    .layers {
        margin-left: -3px;
    }

    .combo {
        display: flex;
        align-items: center;
        gap: 4px;
        height: 33px;
        padding: 0 2px 0 5px;
        box-sizing: border-box;
        border: 2px solid #3c3c3c;
        background: linear-gradient(#515151, #6a6a6a);
    }

    .combo select {
        flex: 1;
        min-width: 0;
    }

    .swatch {
        width: 18px;
        height: 18px;
        margin: 0 3px;
        background: #fff200;
        border: 2px solid #000;
    }

    .swatch.tall {
        width: 22px;
        height: 22px;
        margin: 0 11px 0 13px;
        border: 1px solid #999;
    }

    .rule {
        width: 96px;
        height: 2px;
        margin-right: -2px;
        background: #fff;
    }

    .layers .row {
        display: flex;
        gap: 12px;
        height: 36px;
        align-items: center;
        padding-left: 6px;
    }

    .props {
        display: flex;
        flex-direction: column;
        gap: 3px;
        padding-left: 4px;
    }

    .props .combo {
        font-family: "Open Sans", sans-serif;
        font-weight: 400;
    }

    .groups button {
        width: 34px;
        height: 33px;
    }

    .groups .small:last-child button {
        background: linear-gradient(#7096d0, #4a6aa4);
        outline: 1px solid #2e4a78;
    }

    .clip {
        align-items: center;
        background: linear-gradient(#757575, #525252);
        outline: 2px solid #3a3a3a;
        outline-offset: -2px;
    }

    .clip .big {
        padding-top: 4px;
    }

    .clip > .tri {
        margin-top: 14px;
    }

    .view .body {
        justify-content: center;
    }

    /* File tabs */
    .files {
        display: flex;
        align-items: flex-end;
        height: 37px;
        padding-left: 20px;
        border-bottom: 6px solid #5c5c5c;
        background: #383838;
        color: #c0c0c0;
    }

    .files button {
        justify-content: space-between;
        width: 196px;
        height: 32px;
        padding: 0 22px 2px 25px;
        margin-right: -10px;
        box-sizing: border-box;
        background: linear-gradient(#555, #4a4a4a);
        clip-path: path("M0 32Q6 30 9 20L13 6Q15 0 22 0H174Q182 0 184 6L188 20Q191 31 196 32Z");
    }

    .files b {
        font-family: "DejaVu Sans", sans-serif;
        font-size: 15px;
        color: #333;
    }

    .files .active {
        z-index: 1;
        background: linear-gradient(#7c7c7c, #5c5c5c);
        color: #fff;
    }

    .files .add {
        width: 32px;
        height: 22px;
        margin: 0 0 4px 17px;
        padding: 0;
        justify-content: center;
        background: #555;
        border-radius: 6px 16px 2px 16px;
        clip-path: none;
        color: #ccc;
        font-family: "DejaVu Sans", sans-serif;
        font-size: 15px;
    }

    /* Canvas */
    .canvas {
        position: relative;
        flex: 1;
        min-height: 676px;
        background: #212732;
    }

    .canvas::before {
        content: "[−][俯视][二维线框]";
        position: absolute;
        top: 4px;
        left: 1px;
        font-size: 19px;
        color: #fff;
    }

    .drawing {
        position: absolute;
        inset: 0;
        width: 100%;
        height: 100%;
    }

    .solid {
        fill: none;
        stroke: #eceff5;
        stroke-width: 1.3;
    }

    .dimline {
        fill: none;
        stroke: #e6e000;
        stroke-width: 1.3;
    }

    .gold {
        stroke: #e8c000;
    }

    .head {
        fill: #ffff00;
    }

    .axis {
        fill: none;
        stroke: #c41414;
        stroke-width: 1.6;
        stroke-dasharray: 22 4 3 4;
    }

    .label {
        fill: #f4f01c;
        font-family: "Liberation Serif", serif;
        font-size: 21px;
        font-weight: 400;
    }

    .mid {
        text-anchor: middle;
    }

    .mark {
        fill: none;
        stroke: #ffffff;
        stroke-opacity: 0.12;
        font-size: 45px;
        font-weight: 500;
    }

    .ucs text {
        fill: #eceff5;
        font-family: Lato, sans-serif;
        font-size: 28px;
        font-weight: 300;
    }

    .cube {
        position: absolute;
        top: 21px;
        right: 36px;
        display: grid;
        grid-template-columns: 28px 1fr 28px;
        grid-template-rows: 24px 1fr 24px;
        place-items: center;
        width: 114px;
        height: 114px;
        border-radius: 50%;
        color: #b4b8be;
        font-size: 17px;
        font-weight: 400;
        background: radial-gradient(circle, transparent 44px, #434954 45px, #434954 57px, transparent 58px);
    }

    .cube span:first-child {
        grid-column: 1 / 4;
        margin-top: -16px;
    }

    .cube span:last-child {
        grid-column: 1 / 4;
        margin-bottom: -16px;
    }

    .cube span:nth-child(2) {
        margin-left: -22px;
    }

    .cube span:nth-child(4) {
        margin-right: -22px;
    }

    .cube b {
        width: 50px;
        height: 50px;
        box-sizing: border-box;
        border: 2px solid #b9bbc0;
        background: radial-gradient(#9aa0aa 40%, #a8aaaf 60%);
        color: #3c414c;
        font-size: 28px;
        font-weight: 400;
        line-height: 42px;
        text-align: center;
    }

    .wcs {
        position: absolute;
        top: 161px;
        right: 58px;
        width: 70px;
        height: 26px;
        gap: 9px;
        background: #888c97;
        border: 2px solid #9a9da8;
        border-radius: 5px;
        color: #33373f;
        font-family: "Liberation Sans", sans-serif;
        font-size: 16px;
    }

    .wcs .tri {
        background: #b4b7c0;
    }

    .navbar {
        position: absolute;
        top: 221px;
        right: 17px;
        height: 312px;
        background: #595d64;
        border-radius: 4px;
    }

    .navbar path,
    .navbar circle {
        fill: none;
        stroke: #40454d;
        stroke-width: 1.5;
    }

    .navbar .f {
        fill: #40454d;
    }

    .navbar .sep {
        stroke: #6b6e73;
    }

    .navbar .thick {
        stroke-width: 4;
    }

    .edge {
        position: absolute;
        top: 0;
        right: 0;
        bottom: 0;
        width: 14px;
        background: linear-gradient(90deg, #a9c3ea 8px, #6fdcfa 9px, #6fdcfa 10px, #111 10px, #3c3c3c 12px);
    }

    .edge i {
        position: absolute;
        top: 505px;
        right: 0;
        width: 14px;
        height: 88px;
        border-radius: 4px 0 0 0;
        background:
            repeating-linear-gradient(transparent 0 2px, #3c4a64 2px 3px) 0 0 / 100% 100%,
            linear-gradient(#4a6080 26px, #c9c452 28px, #c9c452 54px, #58b890 60px) 5px 8px / 6px 100% no-repeat,
            #3c4a64;
    }

    .ime {
        position: absolute;
        top: 592px;
        right: 0;
        display: flex;
        align-items: center;
        gap: 9px;
        width: 289px;
        height: 37px;
        padding-left: 22px;
        box-sizing: border-box;
        background: #fff;
    }

    .ime svg {
        flex: none;
    }

    .ime b {
        margin: 0 2px 0 -3px;
        color: #1f6fd0;
        font-size: 22px;
        font-weight: 700;
    }

    .ime .logo {
        margin-left: -46px;
    }

    .console {
        position: absolute;
        left: 383px;
        right: 20%;
        bottom: 0;
    }

    .console p {
        width: max-content;
        margin: 0 0 7px 92px;
        padding: 0 3px 2px 4px;
        background: #5b5e63;
        border-radius: 4px;
        font-size: 19px;
        line-height: 22px;
        color: #b8babd;
    }

    .console p:nth-child(2) {
        color: #d4d6d9;
    }

    .console p:nth-child(3) {
        margin-bottom: 4px;
        color: #fff;
    }

    .command {
        display: flex;
        align-items: center;
        gap: 14px;
        height: 40px;
        padding-left: 9px;
        box-sizing: border-box;
        border: 2px solid #5e6166;
        border-radius: 5px;
        background: linear-gradient(#6c6e72, #3e4044);
    }

    .grip {
        height: 28px;
        border-left: 2px dotted #8f9296;
        margin-right: -4px;
    }

    .command label {
        flex: 1;
        display: flex;
        align-items: center;
        align-self: stretch;
        gap: 6px;
        margin-left: -9px;
        padding: 0 4px 0 7px;
        background: #bdbec0;
    }

    .command input {
        flex: 1;
        padding-left: 5px;
        color: #333;
        font-size: 20px;
    }

    .command input::placeholder {
        color: #66696d;
        font-style: italic;
        opacity: 1;
    }

    /* Layout tabs */
    .layouts {
        display: flex;
        align-items: flex-start;
        height: 28px;
        padding-left: 9px;
        border-top: 2px solid #5c5c5c;
        background: #383838;
        color: #c0c0c0;
    }

    .layouts button {
        width: 82px;
        height: 25px;
        margin-right: -3px;
        padding-bottom: 2px;
        box-sizing: border-box;
        background: linear-gradient(#4c4c4c, #5c5c5c);
        clip-path: path("M0 0H82Q78 2 75 12Q71 25 66 25H18Q12 25 8 12Q5 2 0 0Z");
    }

    .layouts .active {
        background: linear-gradient(#5c5c5c, #888);
        color: #fff;
        font-weight: 700;
    }

    .layouts .add {
        width: 34px;
        clip-path: none;
        height: 23px;
        margin-left: 10px;
        background: #4a4a4a;
        border-radius: 16px 0 16px 4px;
        color: #ccc;
        font-family: "DejaVu Sans", sans-serif;
        font-size: 15px;
    }

    /* Status bar */
    footer {
        display: flex;
        gap: 1px;
        height: 38px;
        padding-left: 177px;
        background: #3a3a3a;
        overflow: hidden;
        font-weight: 500;
        color: #fff;
    }

    footer button {
        height: 36px;
        padding-top: 4px;
        box-sizing: border-box;
    }

    .grp {
        display: flex;
        align-items: center;
        background: #4e4e4e;
        border: 2px solid #757575;
        border-bottom: none;
    }

    .coords {
        width: 271px;
        justify-content: flex-end;
        padding-right: 8px;
        font-family: "Open Sans", sans-serif;
        font-size: 17px;
        font-weight: 600;
    }

    .model {
        width: 43px;
    }

    .st {
        width: 35px;
    }

    .st.on {
        background: #5b8ac0;
    }

    .st-arrow {
        width: 24px;
    }

    .bar {
        align-self: stretch;
        width: 2px;
        background: #6a6a6a;
    }

    .scale {
        width: 52px;
        gap: 6px;
    }

    .grow {
        flex: 1;
    }

    .grow > .tri {
        margin: 4px 6px 0 0;
    }

    .roomy {
        padding: 0 2px;
    }

    .units {
        flex: 1;
        min-width: 40px;
        padding: 4px 0 0 10px;
    }
</style>
